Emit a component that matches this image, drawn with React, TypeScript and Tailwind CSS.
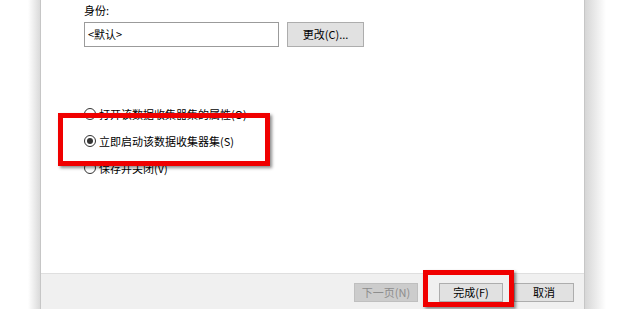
import React from "react";

const font = "font-['Microsoft_YaHei','Noto_Sans_CJK_SC',sans-serif]";

function Radio({ checked, label }: { checked?: boolean; label: string }) {
  return (
    <div className="flex items-center h-[20px]">
      <span className="flex h-[12px] w-[12px] items-center justify-center rounded-full border border-[#333] bg-white">
        {checked && <span className="h-[6px] w-[6px] rounded-full bg-[#333]" />}
      </span>
      <span className="ml-[3px] text-[11px] text-black">{label}</span>
    </div>
  );
}

function Btn({ children, width, disabled }: { children: React.ReactNode; width: string; disabled?: boolean }) {
  return (
    <div
      className={`flex h-[19px] items-center justify-center border text-[11px] ${width} ${
        disabled ? "border-[#bfbfbf] bg-[#cccccc] text-[#8d8d8d]" : "border-[#adadad] bg-[#e1e1e1] text-black"
      }`}
    >
      {children}
    </div>
  );
}

export default function App() {
  return (
    <div className={`relative flex h-[309px] w-[620px] overflow-hidden bg-white ${font}`}>
      {/* left shadow */}
      <div className="w-[40px] shrink-0 bg-gradient-to-r from-white from-70% to-[#dadada]" />

      {/* dialog */}
      <div className="flex w-[545px] shrink-0 flex-col border-x border-[#c6c6c6] bg-white">
        <div className="flex-1 pl-[43px] pt-[3px]">
          <div className="text-[11px] leading-[14px] text-black">身份:</div>
          <div className="mt-[5px] flex">
            <div className="flex h-[25px] w-[195px] items-center border border-[#9b9b9b] pl-[3px] text-[11px] text-black">
              &lt;默认&gt;
            </div>
            <div className="ml-[8px] flex h-[25px] w-[77px] items-center justify-center border border-[#adadad] bg-[#e1e1e1] text-[11px] text-black">
              更改(C)...
            </div>
          </div>

          <div className="mt-[57px] flex flex-col gap-[7px]">
            <Radio label="打开该数据收集器集的属性(O)" />
            <Radio checked label="立即启动该数据收集器集(S)" />
            <Radio label="保存并关闭(V)" />
          </div>
        </div>

        <div className="flex h-[36px] items-start justify-end border-t border-[#dfdfdf] bg-[#f0f0f0] pr-[10px] pt-[9px]">
          <Btn width="w-[64px]" disabled>
            下一页(N)
          </Btn>
          <div className="ml-[21px]">
            <Btn width="w-[64px]">完成(F)</Btn>
          </div>
          <div className="ml-[11px]">
            <Btn width="w-[60px]">取消</Btn>
          </div>
        </div>
      </div>

      {/* right shadow */}
      <div className="flex-1 bg-gradient-to-r from-[#d6d6d6] to-white to-60%" />

      {/* red annotation boxes */}
      <div className="absolute left-[58px] top-[113px] h-[53px] w-[212px] border-[5px] border-[#f00000] shadow-[2px_2px_3px_rgba(0,0,0,0.45)]" />
      <div className="absolute left-[423px] top-[270px] h-[37px] w-[91px] border-[5px] border-[#f00000] shadow-[2px_2px_3px_rgba(0,0,0,0.45)]" />
    </div>
  );
}
